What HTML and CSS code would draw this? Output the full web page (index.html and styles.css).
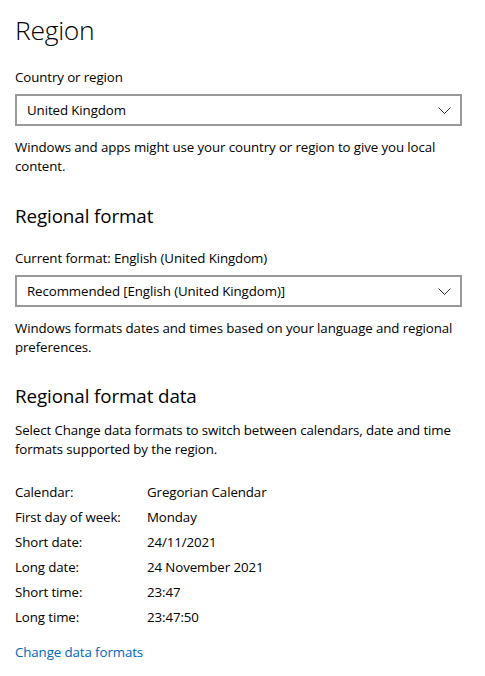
FILE: index.html
```html
<!DOCTYPE html>
<html lang="en">
<head>
<meta charset="utf-8">
<title>Region</title>
<link rel="stylesheet" href="styles.css">
</head>
<body>
<main class="page">
  <h1 class="title">Region</h1>

  <div class="label label-first">Country or region</div>
  <div class="select">
    <span class="select-text">United Kingdom</span>
    <svg class="chevron" width="13" height="7" viewBox="0 0 13 7"><path d="M0.5 0.5 L6.5 6.5 L12.5 0.5" fill="none" stroke="#333" stroke-width="1"/></svg>
  </div>
  <p class="desc">Windows and apps might use your country or region to give you local content.</p>

  <h2 class="heading">Regional format</h2>
  <div class="label label-after-heading">Current format: English (United Kingdom)</div>
  <div class="select">
    <span class="select-text">Recommended [English (United Kingdom)]</span>
    <svg class="chevron" width="13" height="7" viewBox="0 0 13 7"><path d="M0.5 0.5 L6.5 6.5 L12.5 0.5" fill="none" stroke="#333" stroke-width="1"/></svg>
  </div>
  <p class="desc">Windows formats dates and times based on your language and regional preferences.</p>

  <h2 class="heading heading-data">Regional format data</h2>
  <p class="desc desc-after-heading">Select Change data formats to switch between calendars, date and time formats supported by the region.</p>

  <div class="data">
    <span>Calendar:</span><span>Gregorian Calendar</span>
    <span>First day of week:</span><span>Monday</span>
    <span>Short date:</span><span>24/11/2021</span>
    <span>Long date:</span><span>24 November 2021</span>
    <span>Short time:</span><span>23:47</span>
    <span>Long time:</span><span>23:47:50</span>
  </div>

  <a class="link" href="#">Change data formats</a>
</main>
</body>
</html>
```

FILE: styles.css
```css
html, body {
  margin: 0;
  padding: 0;
  background: #ffffff;
}

body {
  font-family: "Open Sans", "Noto Sans", "Liberation Sans", sans-serif;
  color: #000000;
  font-size: 13.3px;
  letter-spacing: -0.1px;
}

.page {
  padding: 10px 23px 0 15px;
  display: flex;
  flex-direction: column;
}

.title {
  margin: 0;
  font-size: 26.5px;
  font-weight: 300;
  line-height: 40px;
  letter-spacing: -0.3px;
}

.label {
  line-height: 19px;
  margin-top: 18px;
}

.label-after-heading {
  margin-top: 19px;
}

.select {
  margin-top: 7px;
  height: 32px;
  box-sizing: border-box;
  border: 2px solid #999999;
  display: flex;
  align-items: center;
  justify-content: space-between;
  padding: 0 9px 0 10px;
}

.select-text {
  line-height: 19px;
}

.chevron {
  display: block;
  margin-top: 1px;
}

.desc {
  margin: 12px 0 0 0;
  line-height: 19px;
}

.heading {
  margin: 26px 0 0 0;
  font-size: 18.8px;
  font-weight: 400;
  line-height: 28px;
  letter-spacing: -0.1px;
}

.heading-data {
  margin-top: 25px;
}

.desc-after-heading {
  margin-top: 11px;
}

.data {
  margin-top: 20px;
  display: grid;
  grid-template-columns: 132px auto;
  grid-auto-rows: 25px;
  align-items: center;
}

.link {
  margin-top: 14px;
  line-height: 19px;
  color: #0067c0;
  text-decoration: none;
  align-self: flex-start;
}
```
